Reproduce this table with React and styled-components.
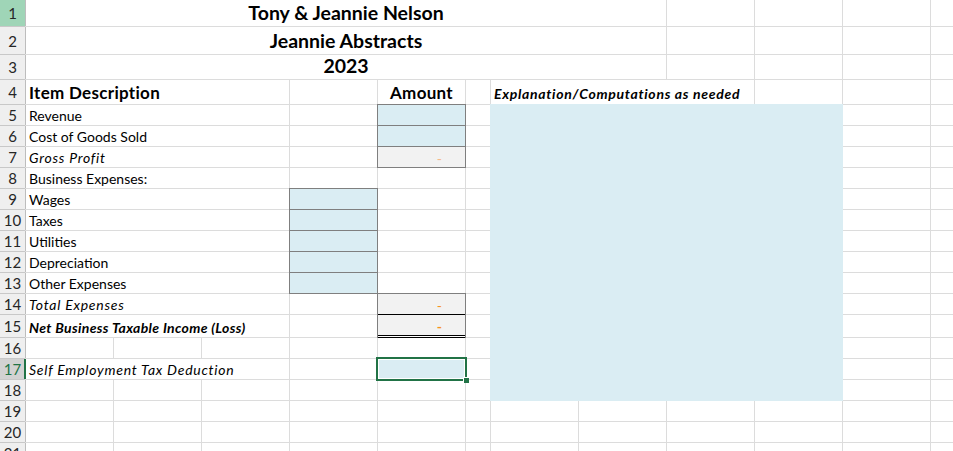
import React from "react";
import styled, { createGlobalStyle, css } from "styled-components";

const GlobalStyle = createGlobalStyle`
  html, body {
    margin: 0;
    padding: 0;
    background: #fff;
    overflow: hidden;
  }
`;

const fills = {
  blue: "#daedf3",
  gray: "#f2f2f2",
};

const frames = {
  box: css`
    box-shadow: 0 0 0 1px #7f7f7f;
  `,
  total: css`
    box-shadow: 0 1px 0 #000, 0 0 0 1px #7f7f7f;
  `,
  net: css`
    box-shadow: inset 0 -1px 0 #fff, inset 0 -2px 0 #000, 0 -1px 0 #000,
      0 1px 0 #000, 0 0 0 1px #7f7f7f;
  `,
  selected: css`
    position: relative;
    z-index: 2;
    box-shadow: inset 0 0 0 1px #fff, 0 0 0 2px #217346;
  `,
};

const Sheet = styled.div`
  display: grid;
  grid-template-columns: 25px repeat(5, 87px) 24px repeat(5, 87px) 1fr;
  grid-template-rows: 26px 27px 24px 24px repeat(10, 20px) 22px repeat(6, 20px);
  gap: 1px;
  width: 953px;
  height: 451px;
  overflow: hidden;
  background: #dcdcdc;
  font-family: Lato, "Open Sans", sans-serif;
  color: #000;
`;

const RowNum = styled.div`
  display: flex;
  align-items: center;
  justify-content: center;
  font-size: 15px;
  color: ${(p) => (p.$state === "active" ? "#217346" : "#262626")};
  background: ${(p) =>
    p.$state === "green" ? "#9fd5b7" : p.$state === "active" ? "#d2d2d2" : "#efefef"};
  box-shadow: ${(p) =>
    p.$state === "active"
      ? "inset -1px 0 0 #217346, 1px 0 0 #217346, 0 1px 0 #c8c8c8"
      : "1px 0 0 #bdbdbd, 0 1px 0 #c8c8c8"};
`;

const Cell = styled.div`
  grid-column: span ${(p) => p.$span || 1};
  display: flex;
  align-items: flex-end;
  justify-content: ${(p) =>
    p.$align === "center" ? "center" : p.$align === "right" ? "flex-end" : "flex-start"};
  min-width: 0;
  padding: 0 3px ${(p) => p.$pb ?? 1}px;
  background: ${(p) => fills[p.$fill] || "#fff"};
  font-size: ${(p) => p.$size || 14}px;
  font-weight: ${(p) => (p.$bold ? 700 : 400)};
  font-style: ${(p) => (p.$italic ? "italic" : "normal")};
  letter-spacing: ${(p) => p.$track || 0}px;
  white-space: nowrap;
  ${(p) => p.$frame && frames[p.$frame]}
`;

const Note = styled.div`
  grid-column: span 4;
  grid-row: span 14;
  margin: -1px;
  background: #daedf3;
`;

const Dash = styled.span`
  padding-right: 20px;
  color: ${(p) => (p.$soft ? "#f6b98a" : "#f7921e")};
  font-weight: ${(p) => (p.$bold ? 700 : 400)};
`;

const Handle = styled.span`
  position: absolute;
  right: -4px;
  bottom: -4px;
  width: 5px;
  height: 5px;
  background: #217346;
  box-shadow: -1px -1px 0 #fff;
`;

const Title = ({ n, text, green }) => (
  <>
    <RowNum $state={green ? "green" : undefined}>{n}</RowNum>
    <Cell $span={8} $align="center" $bold $size={19.5} $pb={2}>
      {text}
    </Cell>
    <Cell />
    <Cell />
    <Cell />
    <Cell />
  </>
);

const lines = [
  { n: 5, label: "Revenue", e: "blue" },
  { n: 6, label: "Cost of Goods Sold", e: "blue" },
  { n: 7, label: "Gross Profit", italic: true, e: "gross" },
  { n: 8, label: "Business Expenses:" },
  { n: 9, label: "Wages", d: true },
  { n: 10, label: "Taxes", d: true },
  { n: 11, label: "Utilities", d: true },
  { n: 12, label: "Depreciation", d: true },
  { n: 13, label: "Other Expenses", d: true },
  { n: 14, label: "Total Expenses", italic: true, e: "total" },
  { n: 15, label: "Net Business Taxable Income (Loss)", italic: true, bold: true, e: "net" },
  { n: 16, blank: true },
  { n: 17, label: "Self Employment Tax Deduction", italic: true, e: "selected" },
  { n: 18, blank: true },
];

function AmountCell({ kind }) {
  if (kind === "blue") return <Cell $fill="blue" $frame="box" />;
  if (kind === "gross")
    return (
      <Cell $fill="gray" $frame="box" $align="right" $pb={0}>
        <Dash $soft>-</Dash>
      </Cell>
    );
  if (kind === "total")
    return (
      <Cell $fill="gray" $frame="total" $align="right" $pb={0}>
        <Dash>-</Dash>
      </Cell>
    );
  if (kind === "net")
    return (
      <Cell $fill="gray" $frame="net" $align="right" $pb={2}>
        <Dash $bold>-</Dash>
      </Cell>
    );
  if (kind === "selected")
    return (
      <Cell $fill="blue" $frame="selected">
        <Handle />
      </Cell>
    );
  return <Cell />;
}

function Line({ row }) {
  // Calibri italics run wider than Lato's, so widen them a little
  const track = row.italic ? (row.bold ? 0.35 : 0.75) : 0;
  return (
    <>
      <RowNum $state={row.n === 17 ? "active" : undefined}>{row.n}</RowNum>
      {row.blank ? (
        <>
          <Cell />
          <Cell />
          <Cell />
        </>
      ) : (
        <Cell $span={3} $italic={row.italic} $bold={row.bold} $track={track}>
          {row.label}
        </Cell>
      )}
      {row.d ? <Cell $fill="blue" $frame="box" /> : <Cell />}
      <AmountCell kind={row.e} />
      <Cell />
      {row.n === 5 && <Note />}
      <Cell />
      <Cell />
    </>
  );
}

function EmptyRow({ n }) {
  return (
    <>
      <RowNum>{n}</RowNum>
      {Array.from({ length: 12 }, (_, i) => (
        <Cell key={i} />
      ))}
    </>
  );
}

export default function App() {
  return (
    <>
      <GlobalStyle />
      <Sheet>
        <Title n={1} text="Tony & Jeannie Nelson" green />
        <Title n={2} text="Jeannie Abstracts" />
        <Title n={3} text="2023" />

        <RowNum>4</RowNum>
        <Cell $span={3} $bold $size={17} $track={0.3}>Item Description</Cell>
        <Cell />
        <Cell $align="center" $bold $size={17} $track={0.3}>Amount</Cell>
        <Cell />
        <Cell $span={3} $bold $italic $size={14} $track={0.7} $pb={2}>
          Explanation/Computations as needed
        </Cell>
        <Cell />
        <Cell />
        <Cell />

        {lines.map((row) => (
          <Line key={row.n} row={row} />
        ))}

        <EmptyRow n={19} />
        <EmptyRow n={20} />
        <EmptyRow n={21} />
      </Sheet>
    </>
  );
}
